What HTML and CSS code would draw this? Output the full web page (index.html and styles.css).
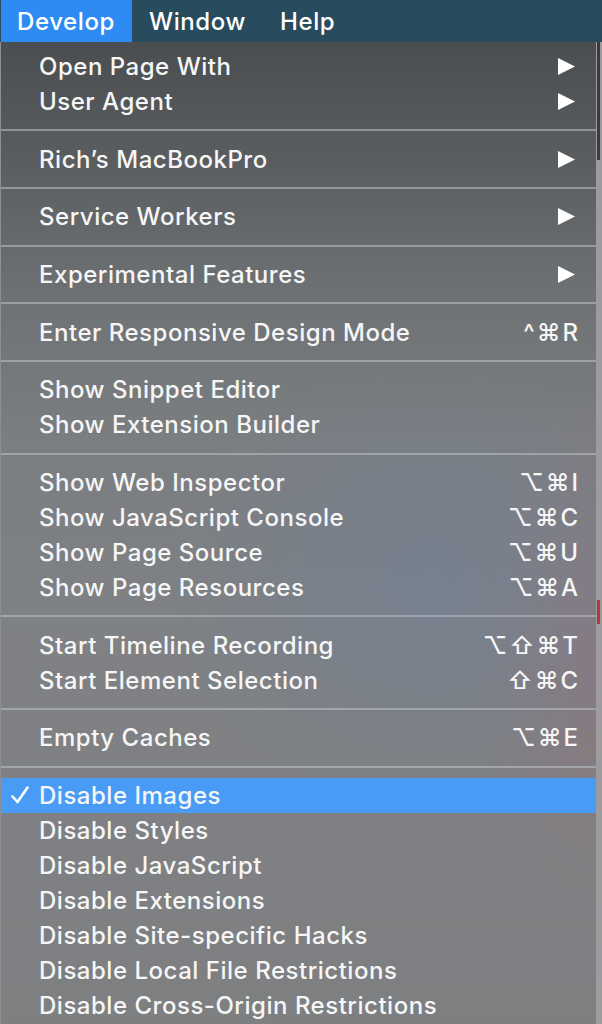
FILE: index.html
```html
<!DOCTYPE html>
<html lang="en">
<head>
<meta charset="utf-8">
<title>Develop menu</title>
<link rel="stylesheet" href="styles.css">
</head>
<body>
<div class="menubar">
  <div class="mb-item active">Develop</div>
  <div class="mb-item">Window</div>
  <div class="mb-item">Help</div>
</div>
<div class="below">
  <div class="panel">
    <div class="item"><span class="gut"></span><span class="label">Open Page With</span><span class="sub"><svg viewBox="0 0 17 17"><polygon points="0,0 17,8.5 0,17"/></svg></span></div>
    <div class="item"><span class="gut"></span><span class="label">User Agent</span><span class="sub"><svg viewBox="0 0 17 17"><polygon points="0,0 17,8.5 0,17"/></svg></span></div>
    <div class="sep"></div>
    <div class="item"><span class="gut"></span><span class="label">Rich’s MacBookPro</span><span class="sub"><svg viewBox="0 0 17 17"><polygon points="0,0 17,8.5 0,17"/></svg></span></div>
    <div class="sep"></div>
    <div class="item"><span class="gut"></span><span class="label">Service Workers</span><span class="sub"><svg viewBox="0 0 17 17"><polygon points="0,0 17,8.5 0,17"/></svg></span></div>
    <div class="sep"></div>
    <div class="item"><span class="gut"></span><span class="label">Experimental Features</span><span class="sub"><svg viewBox="0 0 17 17"><polygon points="0,0 17,8.5 0,17"/></svg></span></div>
    <div class="sep"></div>
    <div class="item"><span class="gut"></span><span class="label">Enter Responsive Design Mode</span><span class="key">^⌘R</span></div>
    <div class="sep"></div>
    <div class="item"><span class="gut"></span><span class="label">Show Snippet Editor</span><span class="key"></span></div>
    <div class="item"><span class="gut"></span><span class="label">Show Extension Builder</span><span class="key"></span></div>
    <div class="sep"></div>
    <div class="item"><span class="gut"></span><span class="label">Show Web Inspector</span><span class="key">⌥⌘I</span></div>
    <div class="item"><span class="gut"></span><span class="label">Show JavaScript Console</span><span class="key">⌥⌘C</span></div>
    <div class="item"><span class="gut"></span><span class="label">Show Page Source</span><span class="key">⌥⌘U</span></div>
    <div class="item"><span class="gut"></span><span class="label">Show Page Resources</span><span class="key">⌥⌘A</span></div>
    <div class="sep"></div>
    <div class="item"><span class="gut"></span><span class="label">Start Timeline Recording</span><span class="key">⌥⇧⌘T</span></div>
    <div class="item"><span class="gut"></span><span class="label">Start Element Selection</span><span class="key">⇧⌘C</span></div>
    <div class="sep"></div>
    <div class="item"><span class="gut"></span><span class="label">Empty Caches</span><span class="key">⌥⌘E</span></div>
    <div class="sep"></div>
    <div class="item checked"><span class="gut"><svg class="check" viewBox="0 0 18 18"><path d="M1.5 10.5 L6.5 16 L16.5 1.5"/></svg></span><span class="label">Disable Images</span><span class="key"></span></div>
    <div class="item"><span class="gut"></span><span class="label">Disable Styles</span><span class="key"></span></div>
    <div class="item"><span class="gut"></span><span class="label">Disable JavaScript</span><span class="key"></span></div>
    <div class="item"><span class="gut"></span><span class="label">Disable Extensions</span><span class="key"></span></div>
    <div class="item"><span class="gut"></span><span class="label">Disable Site-specific Hacks</span><span class="key"></span></div>
    <div class="item"><span class="gut"></span><span class="label">Disable Local File Restrictions</span><span class="key"></span></div>
    <div class="item"><span class="gut"></span><span class="label">Disable Cross-Origin Restrictions</span><span class="key"></span></div>
  </div>
  <div class="edge">
    <div class="thumb"></div>
    <div class="edge-gap"></div>
    <div class="redmark"></div>
  </div>
</div>
</body>
</html>
```

FILE: styles.css
```css
html, body {
  margin: 0;
  padding: 0;
}
body {
  width: 602px;
  height: 1024px;
  overflow: hidden;
  font-family: Inter, "Liberation Sans", sans-serif;
  color: #f6f6f6;
  background: #7f8082;
}
.menubar {
  height: 42px;
  display: flex;
  align-items: stretch;
  background: #284b5e;
  font-size: 24px;
  font-weight: 500;
  letter-spacing: 0.6px;
}
.mb-item {
  display: flex;
  align-items: center;
  padding: 0 17px 0 17px;
  color: #ffffff;
}
.mb-item.active {
  background: #2e8bf4;
  margin-left: 1px;
  padding-left: 16px;
}
.below {
  display: flex;
  height: 982px;
}
.panel {
  width: 596px;
  padding-top: 7px;
  border-left: 1px solid #8d8f91;
  box-sizing: border-box;
  background:
    radial-gradient(ellipse 260px 220px at 72% 55%, rgba(112,128,152,0.55), rgba(112,128,152,0) 100%),
    radial-gradient(ellipse 120px 260px at 100% 62%, rgba(150,112,122,0.45), rgba(150,112,122,0) 100%),
    linear-gradient(180deg, #4b4e50 0%, #5d6063 14%, #6f7275 26%, #7b7e81 40%, #7f8184 60%, #7e7f81 100%);
}
.item {
  display: flex;
  align-items: center;
  height: 35px;
  font-size: 24px;
  font-weight: 500;
  letter-spacing: 0.52px;
  padding-right: 16px;
}
.item.checked {
  background: #4a9bf6;
}
.gut {
  width: 38px;
  flex: none;
  display: flex;
  align-items: center;
}
.check {
  width: 18px;
  height: 18px;
  margin-left: 10px;
  fill: none;
  stroke: #ffffff;
  stroke-width: 2.6;
  stroke-linecap: round;
  stroke-linejoin: round;
}
.label {
  flex: 1;
  white-space: nowrap;
}
.key {
  font-family: Inter, "DejaVu Sans", sans-serif;
  letter-spacing: 2px;
}
.sub {
  display: flex;
  margin-right: 5px;
}
.sub svg {
  width: 17px;
  height: 17px;
  fill: #ffffff;
}
.sep {
  height: 2px;
  margin: 10.33px 0;
  background: rgba(190,195,200,0.55);
}
.edge {
  flex: 1;
  display: flex;
  flex-direction: column;
  background: #9c9c9e;
  padding-left: 1px;
}
.thumb {
  height: 118px;
  width: 3px;
  background: #3a3b3d;
}
.edge-gap {
  height: 440px;
}
.redmark {
  height: 24px;
  width: 3px;
  background: #b23a3a;
}
```
